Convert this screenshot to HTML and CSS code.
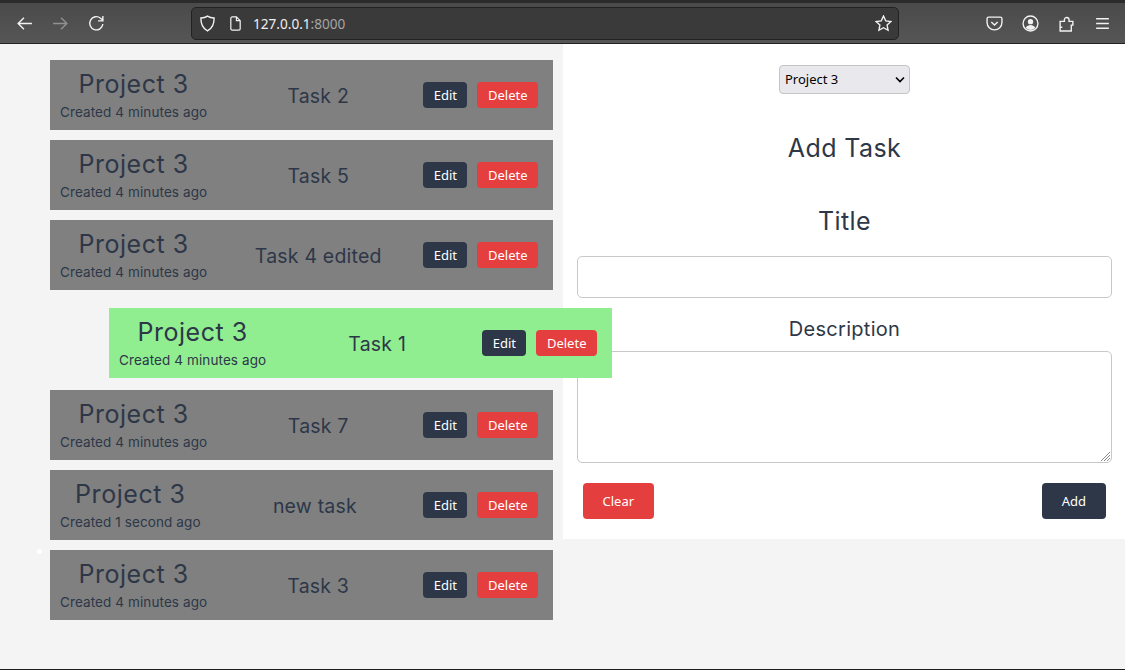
FILE: index.html
```html
<!DOCTYPE html>
<html>
<head>
    <title>Tasks</title>
    <link rel="stylesheet" href="styles.css">
</head>
<body>

    <header class="toolbar">
        <div class="nav-icons">
            <svg class="icon" viewBox="0 0 16 16"><path d="M15 8H2M7.500 2.500 2 8l5.500 5.500"/></svg>
            <svg class="icon dim" viewBox="0 0 16 16"><path d="M1 8h13M8.500 2.500 14 8l-5.500 5.500"/></svg>
            <svg class="icon" viewBox="0 0 16 16"><path d="M14 8.500A6.200 6.200 0 1 1 11.800 3L14 5M14 1v4.500H9.500"/></svg>
        </div>
        <div class="urlbar">
            <svg class="icon" viewBox="0 0 16 16"><path d="M8 1c2 1.300 4 1.700 6.200 1.800C14.400 8 12.500 12.500 8 15 3.500 12.500 1.600 8 1.800 2.800 4 2.700 6 2.300 8 1z"/></svg>
            <svg class="icon page" viewBox="0 0 16 16"><path d="M3 2.500A1.500 1.500 0 0 1 4.500 1H9l4 4v8.500a1.500 1.500 0 0 1-1.500 1.500h-7A1.500 1.500 0 0 1 3 13.500zM9 1v4h4"/></svg>
            <span class="url">127.0.0.1<span class="port">:8000</span></span>
            <svg class="icon star" viewBox="0 0 16 16"><path d="m8 1 2.100 4.500 4.900.6-3.600 3.400.9 4.900L8 12l-4.300 2.400.9-4.900L1 6.100l4.900-.6z"/></svg>
        </div>
        <div class="tool-icons">
            <svg class="icon" viewBox="0 0 16 16"><path d="M2.500 2h11A1.500 1.500 0 0 1 15 3.500V7A7 7 0 0 1 1 7V3.500A1.500 1.500 0 0 1 2.500 2zM5 6.500l3 3 3-3"/></svg>
            <svg class="icon" viewBox="0 0 16 16"><circle cx="8" cy="8" r="7"/><circle class="solid" cx="8" cy="6.300" r="2.500"/><path class="solid" d="M3.500 12c1-2 2.700-2.700 4.500-2.700s3.500.7 4.500 2.700C11 13.700 9.500 14 8 14s-3-.3-4.500-2z"/></svg>
            <svg class="icon" viewBox="0 0 16 16"><path d="M2 15V6h4V4.500a2.200 2.200 0 1 1 4.400 0V6H14v3.500h-1.500V15zM2 11.500h2"/></svg>
            <svg class="icon" viewBox="0 0 16 16"><path d="M2 3.500h12M2 8h12M2 12.500h12"/></svg>
        </div>
    </header>

    <main class="page-body">
        <div class="drag-dot"></div>

        <section class="task-list">
            <div class="task-row">
                <div class="task-info"><h3>Project 3</h3><small>Created 4 minutes ago</small></div>
                <p class="task-title">Task 2</p>
                <div class="task-actions"><button class="btn btn-dark">Edit</button><button class="btn btn-red">Delete</button></div>
            </div>
            <div class="task-row">
                <div class="task-info"><h3>Project 3</h3><small>Created 4 minutes ago</small></div>
                <p class="task-title">Task 5</p>
                <div class="task-actions"><button class="btn btn-dark">Edit</button><button class="btn btn-red">Delete</button></div>
            </div>
            <div class="task-row">
                <div class="task-info"><h3>Project 3</h3><small>Created 4 minutes ago</small></div>
                <p class="task-title">Task 4 edited</p>
                <div class="task-actions"><button class="btn btn-dark">Edit</button><button class="btn btn-red">Delete</button></div>
            </div>
            <div class="drag-slot">
                <div class="task-row dragging">
                    <div class="task-info"><h3>Project 3</h3><small>Created 4 minutes ago</small></div>
                    <p class="task-title">Task 1</p>
                    <div class="task-actions"><button class="btn btn-dark">Edit</button><button class="btn btn-red">Delete</button></div>
                </div>
            </div>
            <div class="task-row">
                <div class="task-info"><h3>Project 3</h3><small>Created 4 minutes ago</small></div>
                <p class="task-title">Task 7</p>
                <div class="task-actions"><button class="btn btn-dark">Edit</button><button class="btn btn-red">Delete</button></div>
            </div>
            <div class="task-row">
                <div class="task-info"><h3>Project 3</h3><small>Created 1 second ago</small></div>
                <p class="task-title">new task</p>
                <div class="task-actions"><button class="btn btn-dark">Edit</button><button class="btn btn-red">Delete</button></div>
            </div>
            <div class="task-row">
                <div class="task-info"><h3>Project 3</h3><small>Created 4 minutes ago</small></div>
                <p class="task-title">Task 3</p>
                <div class="task-actions"><button class="btn btn-dark">Edit</button><button class="btn btn-red">Delete</button></div>
            </div>
        </section>

        <section class="task-form">
            <select class="project-select">
                <option>Project 3</option>
            </select>
            <h2 class="form-heading">Add Task</h2>
            <label class="title-label" for="title">Title</label>
            <input type="text" id="title">
            <label class="desc-label" for="description">Description</label>
            <div class="textarea-wrap">
                <textarea id="description"></textarea>
                <svg class="grip" viewBox="0 0 11 11"><path d="M1 10 10 1M4 10l6-6M7 10l3-3"/></svg>
            </div>
            <div class="form-actions">
                <button class="btn btn-red btn-large">Clear</button>
                <button class="btn btn-dark btn-large">Add</button>
            </div>
        </section>
    </main>

</body>
</html>
```

FILE: styles.css
```css
* {
    box-sizing: border-box;
}

body {
    margin: 0;
    height: 670px;
    overflow: hidden;
    background-color: #f4f4f4;
    border-bottom: 1px solid #1c1c1c;
    font-family: Inter, "Liberation Sans", sans-serif;
    color: #2d3748;
}

/* browser chrome */
.toolbar {
    display: flex;
    align-items: center;
    height: 44px;
    padding-left: 16px;
    background: linear-gradient(#4a4a4a, #565656);
    border-top: 3px solid #2b2b2b;
    border-bottom: 1px solid #222;
}

.icon {
    width: 17px;
    height: 17px;
    flex: none;
    fill: none;
    stroke: #f2f2f2;
    stroke-width: 1.3;
}

.icon .solid {
    fill: #f2f2f2;
    stroke: none;
}

.icon.dim {
    opacity: 0.4;
}

.nav-icons {
    display: flex;
    gap: 19px;
    width: 175px;
}

.urlbar {
    display: flex;
    align-items: center;
    width: 708px;
    height: 33px;
    padding: 0 6px 0 7px;
    background-color: #3a3a3a;
    border: 1px solid #222;
    border-radius: 5px;
}

.urlbar .page {
    width: 15px;
    height: 15px;
    margin-left: 12px;
}

.url {
    margin-left: 10px;
    font-family: "Noto Sans", sans-serif;
    font-size: 13.600px;
    color: #f0f0f0;
}

.port {
    color: #a5a5a5;
}

.star {
    margin-left: auto;
}

.tool-icons {
    display: flex;
    gap: 19px;
    margin-left: 87px;
}

/* page */
.page-body {
    position: relative;
    display: flex;
    align-items: flex-start;
}

.drag-dot {
    position: absolute;
    left: 37px;
    top: 505px;
    width: 5px;
    height: 5px;
    border-radius: 50%;
    background-color: #fff;
}

.task-list {
    display: flex;
    flex-direction: column;
    gap: 10px;
    width: 503px;
    margin: 16px 10px 0 50px;
}

.task-row {
    display: flex;
    align-items: center;
    justify-content: space-between;
    width: 503px;
    height: 70px;
    padding: 0 15px 0 10px;
    background-color: #808080;
}

.drag-slot {
    position: relative;
    z-index: 1;
    height: 80px;
}

.dragging {
    position: absolute;
    left: 59px;
    top: 8px;
    background-color: #90ee90;
}

.task-info {
    display: flex;
    flex-direction: column;
    align-items: center;
    margin-top: -2px;
}

.task-info h3 {
    margin: 0;
    font-size: 25px;
    font-weight: 400;
    line-height: 32px;
    letter-spacing: 0.55px;
}

.task-info small {
    margin-top: 3px;
    font-size: 13.500px;
    font-weight: 400;
    line-height: 18px;
    letter-spacing: 0.1px;
}

.task-title {
    margin: 2px 0 0 6px;
    font-size: 19.500px;
    line-height: 26px;
    letter-spacing: 0.2px;
}

.task-actions {
    display: flex;
    gap: 10px;
}

.btn {
    height: 26px;
    padding: 0 10.500px;
    border: none;
    border-radius: 4px;
    font-family: "Noto Sans", sans-serif;
    font-size: 13px;
    color: #fff;
}

.btn-dark {
    background-color: #2d3748;
}

.btn-red {
    background-color: #e53e3e;
}

.btn-large {
    height: 36px;
    padding: 0 20px;
}

.btn-red.btn-large {
    padding: 0 19.500px;
}

.task-form {
    display: flex;
    flex-direction: column;
    align-items: center;
    width: 562px;
    height: 495px;
    padding: 21px 13px 0 14px;
    background-color: #fff;
}

.project-select {
    appearance: none;
    width: 131px;
    height: 29px;
    padding: 0 0 2px 5px;
    background-color: #e9e9ed;
    background-image: url("data:image/svg+xml,%3Csvg xmlns='http://www.w3.org/2000/svg' width='10' height='7'%3E%3Cpath d='M1 1.500 5 5.500 9 1.500' fill='none' stroke='%23000' stroke-width='1.600'/%3E%3C/svg%3E");
    background-repeat: no-repeat;
    background-position: right 4px center;
    border: 1px solid #c4c4c4;
    border-radius: 4px;
    font-family: "Noto Sans", sans-serif;
    font-size: 13px;
    color: #000;
}

.form-heading,
.title-label {
    font-size: 25px;
    font-weight: 400;
    line-height: 32px;
    letter-spacing: 0.4px;
}

.form-heading {
    margin: 38px 0 0;
}

.title-label {
    margin-top: 41px;
}

.desc-label {
    margin-top: 18px;
    font-size: 20px;
    line-height: 26px;
    letter-spacing: 0.3px;
}

#title,
#description {
    display: block;
    width: 100%;
    background-color: #fff;
    border: 1px solid #c8c8c8;
    border-radius: 5px;
}

#title {
    height: 42px;
    margin-top: 19px;
}

.textarea-wrap {
    position: relative;
    width: 100%;
    margin-top: 9px;
}

#description {
    height: 112px;
    resize: none;
}

.grip {
    position: absolute;
    right: 1px;
    bottom: 1px;
    width: 11px;
    height: 11px;
    fill: none;
    stroke: #8a8a8a;
    stroke-width: 1;
}

.form-actions {
    display: flex;
    justify-content: space-between;
    width: 100%;
    margin-top: 20px;
    padding: 0 6px;
}
```
